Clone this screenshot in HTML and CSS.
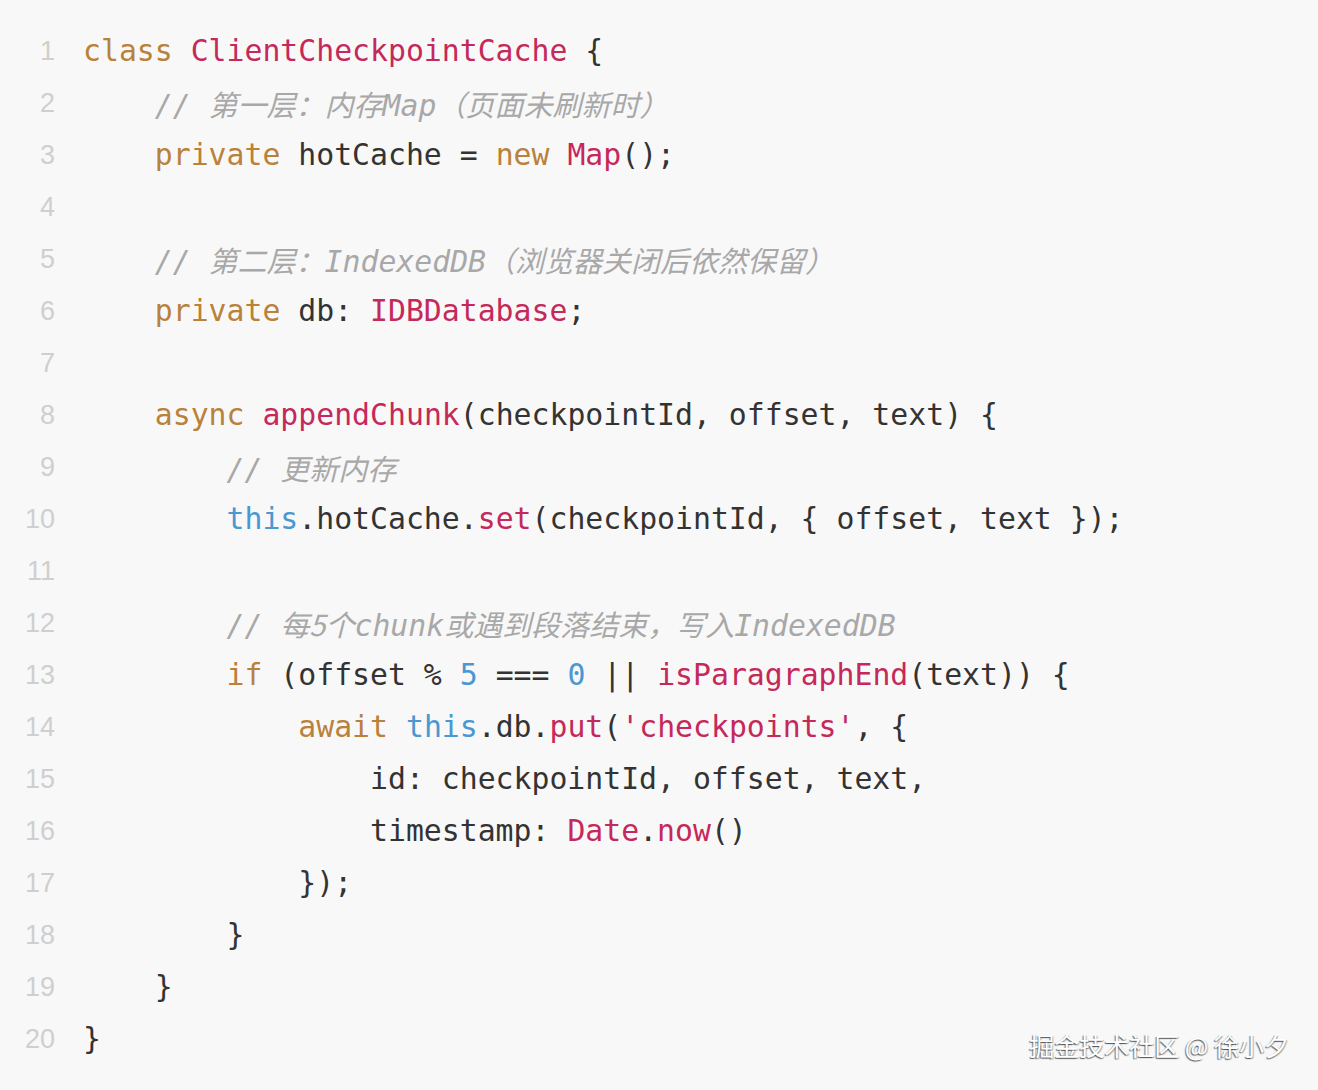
FILE: index.html
```html
<!DOCTYPE html>
<html lang="zh-CN">
<head>
<meta charset="utf-8">
<title>ClientCheckpointCache</title>
<link rel="stylesheet" href="styles.css">
</head>
<body>
<div class="code-block">
  <div class="gutter">
    <div class="ln">1</div><div class="ln">2</div><div class="ln">3</div><div class="ln">4</div><div class="ln">5</div>
    <div class="ln">6</div><div class="ln">7</div><div class="ln">8</div><div class="ln">9</div><div class="ln">10</div>
    <div class="ln">11</div><div class="ln">12</div><div class="ln">13</div><div class="ln">14</div><div class="ln">15</div>
    <div class="ln">16</div><div class="ln">17</div><div class="ln">18</div><div class="ln">19</div><div class="ln">20</div>
  </div>
  <pre class="code"><div class="line"><span class="kw">class</span> <span class="ty">ClientCheckpointCache</span> {</div><div class="line">    <span class="cm">// <span class="cjk">第一层：内存</span>Map<span class="cjk">（页面未刷新时）</span></span></div><div class="line">    <span class="kw">private</span> hotCache = <span class="kw">new</span> <span class="ty">Map</span>();</div><div class="line"> </div><div class="line">    <span class="cm">// <span class="cjk">第二层：</span>IndexedDB<span class="cjk">（浏览器关闭后依然保留）</span></span></div><div class="line">    <span class="kw">private</span> db: <span class="ty">IDBDatabase</span>;</div><div class="line"> </div><div class="line">    <span class="kw">async</span> <span class="ty">appendChunk</span>(checkpointId, offset, text) {</div><div class="line">        <span class="cm">// <span class="cjk">更新内存</span></span></div><div class="line">        <span class="th">this</span>.hotCache.<span class="ty">set</span>(checkpointId, { offset, text });</div><div class="line"> </div><div class="line">        <span class="cm">// <span class="cjk">每5个</span>chunk<span class="cjk">或遇到段落结束，写入</span>IndexedDB</span></div><div class="line">        <span class="kw">if</span> (offset % <span class="nu">5</span> === <span class="nu">0</span> || <span class="ty">isParagraphEnd</span>(text)) {</div><div class="line">            <span class="kw">await</span> <span class="th">this</span>.db.<span class="ty">put</span>(<span class="ty">'checkpoints'</span>, {</div><div class="line">                id: checkpointId, offset, text,</div><div class="line">                timestamp: <span class="ty">Date</span>.<span class="ty">now</span>()</div><div class="line">            });</div><div class="line">        }</div><div class="line">    }</div><div class="line">}</div></pre>
  <div class="watermark">掘金技术社区 @ 徐小夕</div>
</div>
</body>
</html>
```

FILE: styles.css
```css
html, body {
  margin: 0;
  padding: 0;
  background: #f8f8f8;
}

.code-block {
  position: relative;
  display: flex;
  width: 1318px;
  height: 1090px;
  box-sizing: border-box;
  padding-top: 25px;
  background: #f8f8f8;
}

.gutter {
  width: 55px;
  flex: none;
  text-align: right;
  font-family: "Liberation Sans", "Noto Sans", sans-serif;
  font-size: 27px;
  color: #cfcfcf;
}

.ln {
  height: 52px;
  line-height: 52px;
}

.code {
  margin: 0 0 0 28px;
  font-family: "DejaVu Sans Mono", "Noto Sans CJK SC", monospace;
  font-size: 29.8px;
  color: #333333;
}

.line {
  height: 52px;
  line-height: 52px;
  white-space: pre;
}

.kw { color: #b9813a; }
.ty { color: #c5285a; }
.th { color: #4a97d2; }
.nu { color: #4a97d2; }
.cm {
  color: #a8a8a8;
  font-style: italic;
}
.cjk {
  font-family: "Noto Sans CJK SC", sans-serif;
  font-size: 29px;
}

.watermark {
  position: absolute;
  right: 29px;
  bottom: 27px;
  font-family: "Noto Sans CJK SC", sans-serif;
  font-size: 25px;
  color: #ffffff;
  text-shadow: -1px 1px 1px rgba(0, 0, 0, 0.55), 1px 1px 1px rgba(0, 0, 0, 0.3);
}
```
